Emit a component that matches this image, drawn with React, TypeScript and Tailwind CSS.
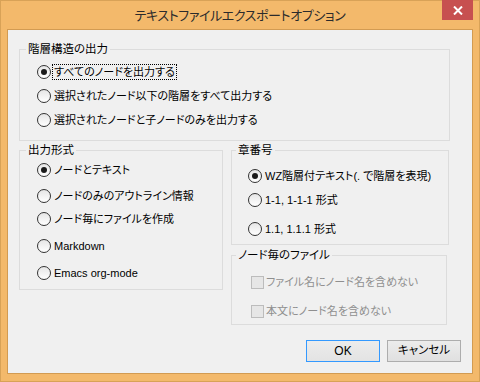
import React from "react";

const FONT = '"Liberation Sans", "Noto Sans CJK JP", sans-serif';

function Radio({ checked }: { checked?: boolean }) {
  return (
    <span className="w-[14px] h-[14px] rounded-full border border-[#333333] bg-gradient-to-b from-[#e6e6e6] to-[#ffffff] flex items-center justify-center shrink-0">
      {checked && <span className="w-[6px] h-[6px] rounded-full bg-[#1a1a1a]" />}
    </span>
  );
}

function RadioRow({
  label,
  checked,
  focus,
  className,
}: {
  label: string;
  checked?: boolean;
  focus?: boolean;
  className?: string;
}) {
  return (
    <div className={"flex items-center h-[20px] " + (className ?? "")}>
      <Radio checked={checked} />
      <span
        className={
          "ml-[1px] px-[1px] leading-[14px] border " +
          (focus ? "border-dotted border-black" : "border-transparent")
        }
      >
        {label}
      </span>
    </div>
  );
}

function CheckRow({ label, className }: { label: string; className?: string }) {
  return (
    <div className={"flex items-center h-[20px] " + (className ?? "")}>
      <span className="w-[13px] h-[13px] border border-[#bcbcbc] bg-[#e6e6e6] shrink-0" />
      <span className="ml-[2px] text-[#8f8f8f] leading-[14px]">{label}</span>
    </div>
  );
}

export default function App() {
  return (
    <div
      className="relative w-[480px] h-[382px] bg-[#f3b96b] border border-[#d8a257] flex flex-col text-[11px] text-black"
      style={{ fontFamily: FONT, fontFeatureSettings: '"palt"' }}
    >
      <div className="h-[28px] pt-[2px] flex items-center justify-center text-[13px] tracking-[-0.4px] text-[#2b2b2b]">
        テキストファイルエクスポートオプション
      </div>
      <div className="absolute top-[-1px] right-[6px] w-[31px] h-[20px] bg-[#c75050] flex items-center justify-center">
        <svg width="10" height="9" viewBox="0 0 10 9">
          <path d="M1 0.5 L9 8.5 M9 0.5 L1 8.5" stroke="#ffffff" strokeWidth="2" />
        </svg>
      </div>

      <div className="mx-[6px] h-[345px] border border-[#d29b52] bg-[#f0f0f0] p-[11px] flex flex-col">
        {/* Group 1 */}
        <fieldset className="w-[431px] h-[102px] border border-[#dcdcdc] px-[6px]">
          <legend className="px-[2px] leading-[16px] text-[11.5px]">階層構造の出力</legend>
          <div className="pl-[11px] pt-[3px] flex flex-col">
            <div className="h-[24px] flex items-center">
              <RadioRow label="すべてのノードを出力する" checked focus />
            </div>
            <div className="h-[24px] flex items-center">
              <RadioRow label="選択されたノード以下の階層をすべて出力する" />
            </div>
            <div className="h-[24px] flex items-center">
              <RadioRow label="選択されたノードと子ノードのみを出力する" />
            </div>
          </div>
        </fieldset>

        <div className="mt-[1px] flex gap-[8px] items-start">
          {/* Group 2 */}
          <fieldset className="w-[204px] h-[148px] border border-[#dcdcdc] px-[6px]">
            <legend className="px-[2px] leading-[16px] text-[11.5px]">出力形式</legend>
            <div className="pl-[11px] flex flex-col">
              <RadioRow label="ノードとテキスト" checked className="mt-[2px]" />
              <RadioRow label="ノードのみのアウトライン情報" className="mt-[6px]" />
              <RadioRow label="ノード毎にファイルを作成" className="mt-[3px]" />
              <RadioRow label="Markdown" className="mt-[7px]" />
              <RadioRow label="Emacs org-mode" className="mt-[7px]" />
            </div>
          </fieldset>

          <div className="flex flex-col w-[218px]">
            {/* Group 3 */}
            <fieldset className="w-[218px] h-[103px] border border-[#dcdcdc] px-[4px]">
              <legend className="px-[2px] leading-[16px] text-[11.5px]">章番号</legend>
              <div className="pl-[12px] flex flex-col">
                <RadioRow label="WZ階層付テキスト(. で階層を表現)" checked className="mt-[8px]" />
                <RadioRow label="1-1, 1-1-1 形式" className="mt-[4px]" />
                <RadioRow label="1.1, 1.1.1 形式" className="mt-[9px]" />
              </div>
            </fieldset>

            {/* Group 4 */}
            <fieldset className="mt-[2px] w-[216px] h-[78px] border border-[#dcdcdc] px-[4px]">
              <legend className="px-[2px] leading-[16px] text-[11.5px]">ノード毎のファイル</legend>
              <div className="pl-[15px] flex flex-col">
                <CheckRow label="ファイル名にノード名を含めない" className="mt-[9px]" />
                <CheckRow label="本文にノード名を含めない" className="mt-[9px]" />
              </div>
            </fieldset>
          </div>
        </div>

        <div className="mt-[15px] flex justify-end gap-[7px]">
          <button className="w-[74px] h-[22px] border border-[#3399ff] bg-gradient-to-b from-[#ececec] to-[#e3e3e3] text-[12px] flex items-center justify-center">
            OK
          </button>
          <button className="w-[74px] h-[22px] border border-[#adadad] bg-gradient-to-b from-[#ececec] to-[#e0e0e0] text-[11.5px] flex items-center justify-center">
            キャンセル
          </button>
        </div>
      </div>
    </div>
  );
}
